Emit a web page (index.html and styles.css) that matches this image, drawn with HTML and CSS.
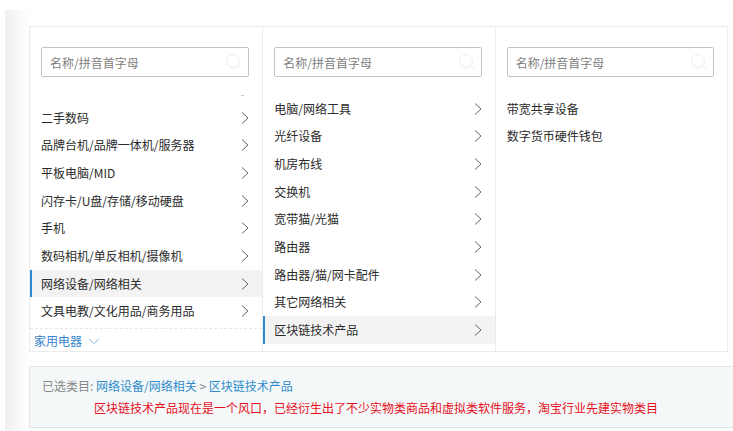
FILE: index.html
```html
<!DOCTYPE html>
<html lang="zh-CN">
  <head>
    <meta charset="UTF-8" />
    <meta name="viewport" content="width=device-width, initial-scale=1.0" />
    <title>选择类目</title>
    <link rel="stylesheet" href="styles.css">
  </head>
  <body>
    <!-- Shared icons -->
    <svg class="icon-defs" aria-hidden="true">
      <symbol id="icon-search" viewBox="0 0 18 18">
        <circle cx="8" cy="8" r="6.5" />
        <path d="M13 13l3 3" />
      </symbol>
      <symbol id="icon-arrow" viewBox="0 0 8 14">
        <path d="M1 1.5L7 7L1 12.5" />
      </symbol>
      <symbol id="icon-down" viewBox="0 0 12 7">
        <path d="M1 1L6 5.5L11 1" />
      </symbol>
    </svg>

    <div class="page">
      <main class="content">
        <div class="category-picker">
          <!-- Level 1 -->
          <section class="column column-first">
            <div class="search">
              <input type="text" placeholder="名称/拼音首字母" aria-label="一级类目搜索" />
              <svg class="icon-search"><use href="#icon-search" /></svg>
            </div>
            <ul class="list list-short">
              <li><a href="#">二手数码<svg class="icon-arrow"><use href="#icon-arrow" /></svg></a></li>
              <li><a href="#">品牌台机/品牌一体机/服务器<svg class="icon-arrow"><use href="#icon-arrow" /></svg></a></li>
              <li><a href="#">平板电脑/MID<svg class="icon-arrow"><use href="#icon-arrow" /></svg></a></li>
              <li><a href="#">闪存卡/U盘/存储/移动硬盘<svg class="icon-arrow"><use href="#icon-arrow" /></svg></a></li>
              <li><a href="#">手机<svg class="icon-arrow"><use href="#icon-arrow" /></svg></a></li>
              <li><a href="#">数码相机/单反相机/摄像机<svg class="icon-arrow"><use href="#icon-arrow" /></svg></a></li>
              <li><a href="#" class="active">网络设备/网络相关<svg class="icon-arrow"><use href="#icon-arrow" /></svg></a></li>
              <li><a href="#">文具电教/文化用品/商务用品<svg class="icon-arrow"><use href="#icon-arrow" /></svg></a></li>
            </ul>
            <button type="button" class="group-toggle">家用电器<svg class="icon-down"><use href="#icon-down" /></svg></button>
          </section>

          <!-- Level 2 -->
          <section class="column">
            <div class="search">
              <input type="text" placeholder="名称/拼音首字母" aria-label="二级类目搜索" />
              <svg class="icon-search"><use href="#icon-search" /></svg>
            </div>
            <ul class="list">
              <li><a href="#">电脑/网络工具<svg class="icon-arrow"><use href="#icon-arrow" /></svg></a></li>
              <li><a href="#">光纤设备<svg class="icon-arrow"><use href="#icon-arrow" /></svg></a></li>
              <li><a href="#">机房布线<svg class="icon-arrow"><use href="#icon-arrow" /></svg></a></li>
              <li><a href="#">交换机<svg class="icon-arrow"><use href="#icon-arrow" /></svg></a></li>
              <li><a href="#">宽带猫/光猫<svg class="icon-arrow"><use href="#icon-arrow" /></svg></a></li>
              <li><a href="#">路由器<svg class="icon-arrow"><use href="#icon-arrow" /></svg></a></li>
              <li><a href="#">路由器/猫/网卡配件<svg class="icon-arrow"><use href="#icon-arrow" /></svg></a></li>
              <li><a href="#">其它网络相关<svg class="icon-arrow"><use href="#icon-arrow" /></svg></a></li>
              <li><a href="#" class="active">区块链技术产品<svg class="icon-arrow"><use href="#icon-arrow" /></svg></a></li>
            </ul>
          </section>

          <!-- Level 3 -->
          <section class="column">
            <div class="search">
              <input type="text" placeholder="名称/拼音首字母" aria-label="三级类目搜索" />
              <svg class="icon-search"><use href="#icon-search" /></svg>
            </div>
            <ul class="list">
              <li><a href="#">带宽共享设备</a></li>
              <li><a href="#">数字货币硬件钱包</a></li>
            </ul>
          </section>
        </div>

        <div class="selected">
          <p class="selected-path">已选类目: <a href="#">网络设备/网络相关</a> &gt; <a href="#">区块链技术产品</a></p>
          <p class="selected-note">区块链技术产品现在是一个风口，已经衍生出了不少实物类商品和虚拟类软件服务，淘宝行业先建实物类目</p>
        </div>
      </main>
    </div>
  </body>
</html>
```

FILE: styles.css
```css
* {
  box-sizing: border-box;
}

body {
  margin: 0;
  padding: 10px 0 0 5px;
  background: #fff;
  color: #2b2b2b;
  font-family: "Noto Sans CJK SC", sans-serif;
  font-size: 12px;
  line-height: 20px;
}

a {
  color: inherit;
  text-decoration: none;
}

.icon-defs {
  position: absolute;
  width: 0;
  height: 0;
}

.page {
  display: grid;
  grid-template-columns: 24px 1fr;
  min-height: calc(100vh - 10px);
}

/* Shaded gutter on the left */
.page::before {
  content: "";
  background: linear-gradient(90deg, #f0f0f0, #f5f5f5 40%, #fcfcfc 80%, #fff);
}

.content {
  min-width: 0;
  padding-top: 16px;
}

/* Category columns */
.category-picker {
  display: grid;
  grid-template-columns: repeat(3, 1fr);
  margin-right: 5px;
  border: 1px solid #ebebeb;
}

.column {
  padding: 20px 0 7px;
  border-left: 1px solid #ebebeb;
}

.column-first {
  display: flex;
  flex-direction: column;
  padding-bottom: 0;
  border-left: 0;
}

.search {
  position: relative;
  margin: 0 13px 0 11px;
}

.search input {
  display: block;
  width: 100%;
  height: 30px;
  padding: 0 32px 0 8px;
  border: 1px solid #c4c4c4;
  border-radius: 2px;
  background: #fff;
  font: inherit;
  color: #333;
}

.search input::placeholder {
  color: #808080;
  opacity: 1;
}

.icon-search {
  position: absolute;
  top: 6px;
  right: 6px;
  width: 18px;
  height: 18px;
  fill: none;
  stroke: #ececec;
}

.list {
  display: grid;
  grid-template-rows: repeat(9, 1fr);
  height: 249px;
  margin: 18px 0 0;
  padding: 0;
  list-style: none;
}

.list-short {
  position: relative;
  grid-template-rows: repeat(8, 1fr);
  height: 221px;
  margin-top: 27px;
}

/* Tip of the arrow of the row scrolled out above */
.list-short::before {
  content: "";
  position: absolute;
  top: -9px;
  right: 18px;
  width: 3px;
  height: 1px;
  background: #c8c8c8;
}

.list a {
  display: flex;
  align-items: center;
  justify-content: space-between;
  height: 100%;
  padding: 0 13px 0 9px;
  border-left: 2px solid transparent;
}

.list .active {
  border-left-color: #3089d0;
  background: #f3f3f3;
}

.icon-arrow {
  width: 8px;
  height: 14px;
  fill: none;
  stroke: #666;
}

.group-toggle {
  display: flex;
  flex: 1;
  align-items: center;
  gap: 6px;
  margin-top: 3px;
  padding: 2px 4px 0;
  border: 0;
  border-top: 1px dashed #e6e6e6;
  background: none;
  color: #3385cc;
  font: inherit;
}

.icon-down {
  width: 12px;
  height: 7px;
  fill: none;
  stroke: #8db8dd;
}

/* Selected category */
.selected {
  margin-top: 14px;
  padding: 9px 12px;
  border: 1px solid #e4e8e8;
  border-right: 0;
  background: #f4f8f8;
}

.selected p {
  margin: 0;
}

.selected-path {
  color: #888;
}

.selected-path a {
  color: #2f8ccc;
}

.selected .selected-note {
  margin-top: 2px;
  padding-left: 52px;
  color: #e60f22;
}
```
